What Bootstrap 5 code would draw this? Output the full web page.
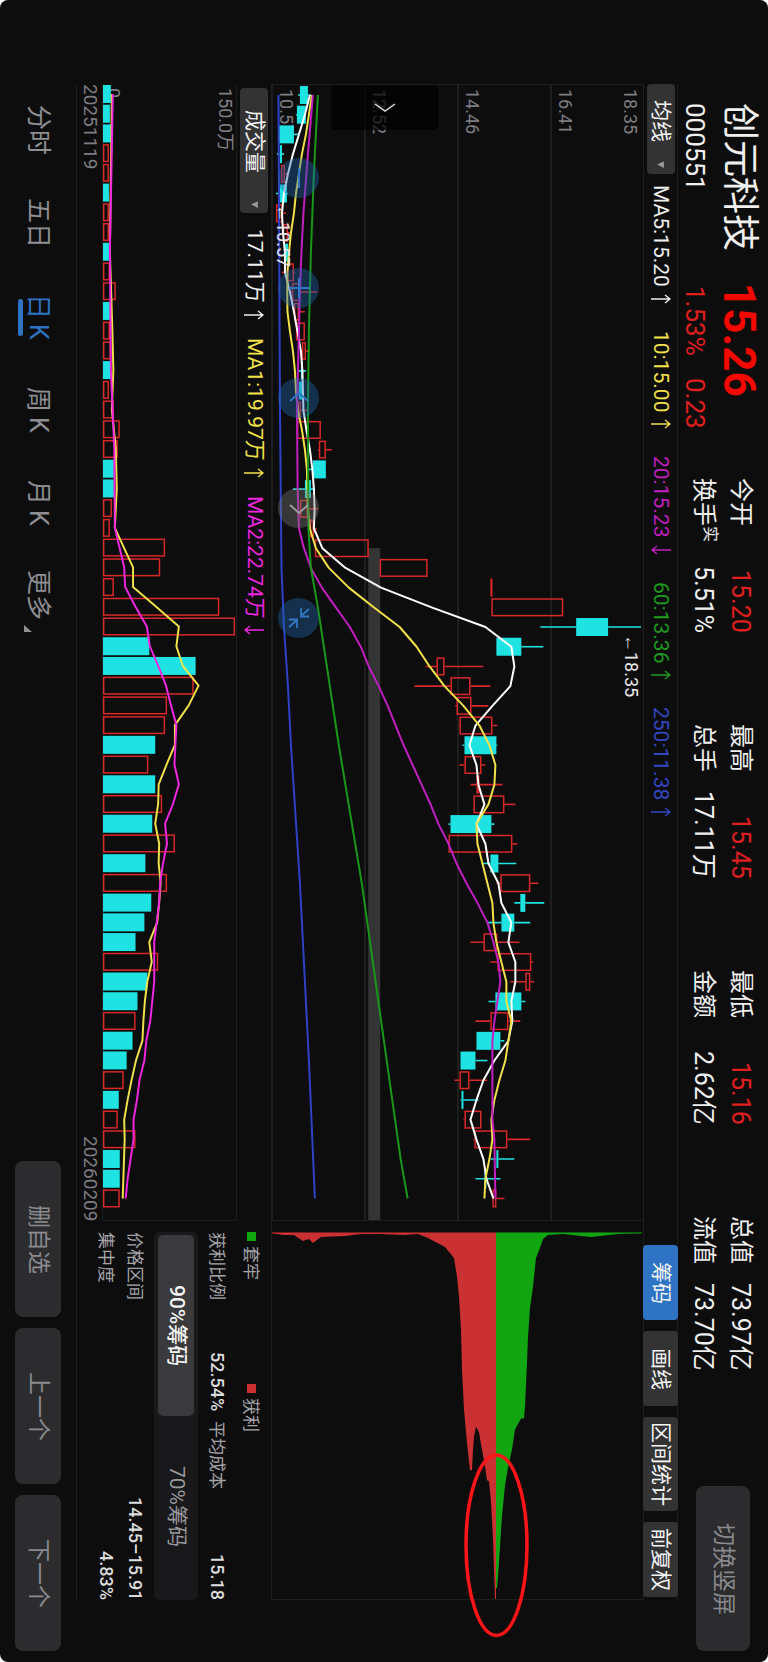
<!DOCTYPE html>
<html lang="zh-CN">
<head>
<meta charset="utf-8">
<meta name="viewport" content="width=device-width, initial-scale=1">
<title>创元科技 000551</title>
<link href="https://cdn.jsdelivr.net/npm/bootstrap@5.3.0/dist/css/bootstrap.min.css" rel="stylesheet">
<style>
:root{--bg:#0d0d0d;--rule:#1e1e1f;--chip:#333334;--dim:#7e7e82;--up:#e01f1f;--accent:#2f74c4;--pad-start:84px;--pad-end:62px}
body{background:#fff;font-family:Roboto,"Liberation Sans","Noto Sans CJK SC",sans-serif;color:#f0f0f0}
/* landscape screen turned a quarter: lines run top to bottom, blocks right to left */
.screen{writing-mode:vertical-rl;text-orientation:sideways;min-height:100vh;width:100%;background:var(--bg);border-radius:8px;line-height:1.2;overflow:hidden;white-space:nowrap}
.screen button,.screen a{writing-mode:vertical-rl;text-orientation:sideways;line-height:1.2;text-decoration:none}
.screen .btn{border:0;padding:0;display:flex;align-items:center;justify-content:center}
.quote{width:90px;padding:103px 9px 11px 0}
.quote .ident{width:78px;height:148px}
.stock{font-size:37px;line-height:40px;margin:0}
.code{font-size:26px;line-height:28px;gap:22px}
.quote .last{width:78px;height:195px;margin-top:32px}
.last .price{font-size:44px;line-height:40px;font-weight:700;color:#f50800}
.last .code{padding-top:3px}
.red{color:var(--up)}
.figures{gap:91px;font-size:24px;line-height:37px}
.figures .pair{height:155px}
.figures .val{font-size:25px}
.figures sup{font-size:16px;line-height:16px;top:0;vertical-align:9px}
.screen .grey-btn{background:#2c2c2e;color:#8a8a8f;border-radius:8px;font-size:23px}
.rotate-btn{width:54px;height:165px;margin-right:9px}
.body-area{margin-top:var(--pad-start);margin-bottom:var(--pad-end)}
.strip{width:35px;border-right:1px solid var(--rule);border-left:1px solid var(--rule);font-size:21px}
.screen .chip-btn{background:var(--chip);color:#f4f4f4;border-radius:4px;font-size:21px}
.screen .pick{width:28px;justify-content:flex-start}
.screen .pick.ma{height:90px;gap:18px;padding-top:16px}
.screen .pick.vol{height:125px;margin-top:4px;gap:27px;padding-top:22px}
.caret{width:9px;height:9px}
.legend-ma{padding-top:11px;gap:27px}
.legend-vol{padding-top:16px;gap:18px}
.arrow{width:20px;height:10px;margin-top:7px}
.tools{gap:11px;margin-bottom:3px}
.tools .btn{width:35px;height:75px}
.tools .btn.wide{height:94px}
.screen .btn.on-blue{background:var(--accent)}
.chips-col{flex:0 0 379px}
.price-box{border-left:1px solid var(--rule);border-top:1px solid var(--rule);border-bottom:1px solid var(--rule)}
.axis{font-size:18px;line-height:20px;color:var(--dim)}
.band{border-left:2px solid var(--rule);padding:4px 3px;flex:1 1 0}
.band.base{border-left:0}
.layer{position:absolute;inset:0;width:100%;height:100%;overflow:visible}
.flag{position:absolute;font-size:18px;line-height:20px;color:#e8e8e8}
.flag.high{left:94%;top:48.4%}
.flag.low{left:0;top:10.5%}
.screen .pull{position:absolute;left:58px;top:0;width:107px;height:45px;background:#000000b0;border-radius:3px}
.zoomers{position:absolute;left:5px;top:73px;gap:70px}
.screen .round{width:41px;height:40px;border-radius:50%;background:#2166ad66}
.screen .round.off{background:#77777766}
.vol-box{width:135px;padding:4px 1px 4px 0;border-left:1px solid var(--rule);border-right:1px solid var(--rule);border-bottom:1px solid var(--rule)}
.dates{width:26px;font-size:19px;line-height:24px;color:var(--dim);border-left:1px solid var(--rule)}
.chip-plot{border-left:1px solid var(--rule);border-bottom:1px solid var(--rule)}
.chip-info{width:195px;gap:9px;padding:11px 10px 0 0;font-size:17px;color:#a4a4a8;border-left:1px solid var(--rule)}
.chip-info .line{width:20px;line-height:20px}
.chip-info .line.key{margin-left:5px}
.chip-info b{font-weight:500;font-size:18px;color:#dcdcdc}
.chip-info .duo{gap:10px}
.chip-info .duo>div{flex:1 1 0}
.sq{width:9px;height:9px;background:#11a611}
.sq.gain{background:#cb3032}
.half{height:152px;gap:5px}
.seg{width:44px;background:#19191b;border-radius:6px;padding:3px 4px}
.screen .seg .btn{flex:1 1 0;font-size:21px;color:#98989c;border-radius:5px}
.screen .seg .btn.on{background:#3a3a3c;color:#f4f4f4;font-weight:500}
.foot{width:76px;padding:0 15px 11px 15px}
.tabs{margin-top:var(--pad-start)}
.tabs a{height:93px;width:46px;font-size:25px;color:#8e8e93;display:flex;align-items:center;justify-content:center;position:relative;gap:5px}
.tabs a.now{color:var(--accent)}
.tabs a.now::after{content:"";position:absolute;left:3px;top:29px;width:5px;height:37px;border-radius:3px;background:var(--accent)}
.tabs .corner{position:absolute;left:9px;top:76px;width:8px;height:7px}
.acts{gap:11px}
.acts .btn{width:46px;height:156px}
</style>
</head>
<body>
<div class="screen d-flex flex-column">

  <header class="quote d-flex align-items-start">
    <div class="ident d-flex flex-column justify-content-between">
      <h1 class="stock fw-normal">创元科技</h1>
      <div class="code">000551</div>
    </div>
    <div class="last d-flex flex-column justify-content-between">
      <div class="price">15.26</div>
      <div class="code red d-flex"><span>1.53%</span><span>0.23</span></div>
    </div>
    <div class="figures d-flex">
      <div class="pair">
        <div class="d-flex justify-content-between"><span>今开</span><span class="val red">15.20</span></div>
        <div class="d-flex justify-content-between"><span>换手<sup>实</sup></span><span class="val">5.51%</span></div>
      </div>
      <div class="pair">
        <div class="d-flex justify-content-between"><span>最高</span><span class="val red">15.45</span></div>
        <div class="d-flex justify-content-between"><span>总手</span><span class="val">17.11万</span></div>
      </div>
      <div class="pair">
        <div class="d-flex justify-content-between"><span>最低</span><span class="val red">15.16</span></div>
        <div class="d-flex justify-content-between"><span>金额</span><span class="val">2.62亿</span></div>
      </div>
      <div class="pair">
        <div class="d-flex justify-content-between"><span>总值</span><span class="val">73.97亿</span></div>
        <div class="d-flex justify-content-between"><span>流值</span><span class="val">73.70亿</span></div>
      </div>
    </div>
    <button type="button" class="btn grey-btn rotate-btn mt-auto">切换竖屏</button>
  </header>

  <main class="body-area flex-fill d-flex flex-column">
    <div class="strip d-flex align-items-center">
      <button type="button" class="btn chip-btn pick ma">均线<svg class="caret" viewBox="0 0 8 8"><path d="M1 4 7 1V7Z" fill="#9a9a9e"/></svg></button>
      <div class="legend-ma d-flex" id="maLegend"></div>
      <div class="tools d-flex mt-auto">
        <button type="button" class="btn chip-btn on-blue">筹码</button>
        <button type="button" class="btn chip-btn">画线</button>
        <button type="button" class="btn chip-btn wide">区间统计</button>
        <button type="button" class="btn chip-btn">前复权</button>
      </div>
    </div>

    <div class="flex-fill d-flex">
      <section class="flex-fill d-flex flex-column">
        <div class="price-box flex-fill position-relative d-flex flex-column axis">
          <div class="band d-flex flex-column justify-content-between"><span>18.35</span><span>16.41</span></div>
          <div class="band d-flex flex-column justify-content-end">14.46</div>
          <div class="band d-flex flex-column justify-content-end">12.52</div>
          <div class="band base d-flex flex-column justify-content-end">10.57</div>
          <svg class="layer" id="priceSvg" viewBox="271 84 371 1137" preserveAspectRatio="none"></svg>
          <span class="flag high">←18.35</span>
          <span class="flag low">←10.57</span>
          <button type="button" class="btn pull" aria-label="展开"><svg width="22" height="10" viewBox="0 0 22 10"><path d="M1 1 11 8 21 1" fill="none" stroke="#ddd" stroke-width="1.5"/></svg></button>
          <div class="zoomers d-flex">
            <button type="button" class="btn round" aria-label="缩小"><svg width="22" height="22" viewBox="0 0 22 22"><path d="M11 1V21" stroke="#3377c4" stroke-width="2"/></svg></button>
            <button type="button" class="btn round" aria-label="放大"><svg width="22" height="22" viewBox="0 0 22 22"><path d="M11 1V21M1 11H21" stroke="#3377c4" stroke-width="2"/></svg></button>
            <button type="button" class="btn round" aria-label="左移"><svg width="22" height="22" viewBox="0 0 22 22"><path d="M2 14 11 6 20 14" fill="none" stroke="#3377c4" stroke-width="2"/></svg></button>
            <button type="button" class="btn round off" aria-label="右移"><svg width="22" height="22" viewBox="0 0 22 22"><path d="M2 8 11 16 20 8" fill="none" stroke="#9a9a9e" stroke-width="2"/></svg></button>
            <button type="button" class="btn round" aria-label="收起"><svg width="22" height="22" viewBox="0 0 22 22"><path d="M21 2 13 9M13 1V9.500H21M1 20 9 13M1 12.500H9V21" fill="none" stroke="#3377c4" stroke-width="1.800"/></svg></button>
          </div>
        </div>
        <div class="strip d-flex align-items-center border-start-0">
          <button type="button" class="btn chip-btn pick vol">成交量<svg class="caret" viewBox="0 0 8 8"><path d="M1 4 7 1V7Z" fill="#9a9a9e"/></svg></button>
          <div class="legend-vol d-flex" id="volLegend"></div>
        </div>
        <div class="vol-box position-relative axis d-flex flex-column justify-content-between">
          <span>150.0万</span><span>0</span>
          <svg class="layer" id="volSvg" viewBox="102 84 135 1137" preserveAspectRatio="none"></svg>
        </div>
        <div class="dates d-flex justify-content-between"><span>20251119</span><span>20260209</span></div>
      </section>

      <aside class="chips-col d-flex flex-column">
        <div class="chip-plot flex-fill position-relative">
          <svg class="layer" viewBox="271 1221 371 379" preserveAspectRatio="none">
            <path fill="#11a611" d="M495 1233H640L617 1234 590 1237 562 1234 547 1235 542 1239 540 1245 535 1258 532 1287 529 1308 527 1337 526 1363 524 1407 523 1419H520L514 1430 511 1450 507 1468 504 1486 501 1517 499 1547 497 1578 496 1589H495Z"/>
            <path fill="#cb3032" d="M495 1233V1600H494L493 1570 492 1540 490 1503 488 1482 486 1481 484 1467 481 1450 478 1433 475 1427 473 1437 472 1450 471 1471H469L467 1453 465 1433 463 1410 461 1370 460 1330 458 1297 456 1277 453 1258 444 1247 427 1238 417 1234 403 1235 379 1234 360 1234 344 1236 320 1237 312 1243 308 1239 302 1241 293 1235 282 1235 271 1233Z"/>
            <path d="M271 1233H495" stroke="#cb3032"/><path d="M495 1233H641" stroke="#11a611"/>
            <ellipse cx="495.500" cy="1546" rx="30.500" ry="90.500" fill="none" stroke="#ff1418" stroke-width="3.500"/>
          </svg>
        </div>
        <div class="chip-info d-flex flex-column">
          <div class="line key d-flex">
            <span class="half d-flex align-items-center"><i class="sq"></i>套牢</span>
            <span class="half d-flex align-items-center"><i class="sq gain"></i>获利</span>
          </div>
          <div class="line duo d-flex">
            <div class="d-flex justify-content-between"><span>获利比例</span><b>52.54%</b></div>
            <div class="d-flex justify-content-between"><span>平均成本</span><b>15.18</b></div>
          </div>
          <div class="seg d-flex" role="group">
            <button type="button" class="btn on">90%筹码</button>
            <button type="button" class="btn">70%筹码</button>
          </div>
          <div class="line d-flex justify-content-between"><span>价格区间</span><b>14.45–15.91</b></div>
          <div class="line d-flex justify-content-between"><span>集中度</span><b>4.83%</b></div>
        </div>
      </aside>
    </div>
  </main>

  <footer class="foot d-flex align-items-center">
    <nav class="tabs d-flex">
      <a href="#">分时</a><a href="#">五日</a><a href="#" class="now">日<span>K</span></a><a href="#">周<span>K</span></a><a href="#">月<span>K</span></a>
      <a href="#">更多<svg class="corner" viewBox="0 0 8 7"><path d="M0 0V7H8Z" fill="#8e8e93"/></svg></a>
    </nav>
    <div class="acts d-flex mt-auto">
      <button type="button" class="btn grey-btn">删自选</button>
      <button type="button" class="btn grey-btn">上一个</button>
      <button type="button" class="btn grey-btn">下一个</button>
    </div>
  </footer>
</div>

<script src="https://cdn.jsdelivr.net/npm/bootstrap@5.3.0/dist/js/bootstrap.bundle.min.js"></script>
<script>
// legends: label, colour, trend
const arrow=(c,up)=>`<svg class="arrow" viewBox="0 0 20 10"><path d="${up?'M0 5H19M14 1 19 5 14 9':'M20 5H1M6 1 1 5 6 9'}" fill="none" stroke="${c}" stroke-width="1.4"/></svg>`;
const legend=(id,items)=>document.getElementById(id).innerHTML=items.map(([t,c,up])=>`<span class="d-flex align-items-center" style="color:${c}">${t}${arrow(c,up)}</span>`).join('');
legend('maLegend',[['MA5:15.20','#f0f0f0',1],['10:15.00','#f2e24a',1],['20:15.23','#c01fc0',0],['60:13.36','#1f9a1f',1],['250:11.38','#3346c4',1]]);
legend('volLegend',[['17.11万','#f0f0f0',1],['MA1:19.97万','#f2e24a',1],['MA2:22.74万','#f026e0',0]]);

const at=i=>94+19.74*i, RED='#d82828', CYAN='#1fe3e3';
const line=(pts,c,w=2)=>`<polyline points="${pts.map(([i,x])=>x+','+at(i)).join(' ')}" fill="none" stroke="${c}" stroke-width="${w}" stroke-linejoin="round"/>`;
const seq=a=>a.map((x,i)=>[i,x]);
const bar=(kind,i,a,b)=>kind==='c'
  ?`<rect x="${a}" y="${at(i)-9}" width="${b-a}" height="18" fill="${CYAN}"/>`
  :`<rect x="${a+.7}" y="${at(i)-8.3}" width="${Math.max(b-a-1.4,.3)}" height="16.6" fill="none" stroke="${RED}" stroke-width="1.5"/>`;

// kind, low, body start, body end, high
const candles=[['c',296,298,306,309],['c',294,295,304,304],['c',277,277,292,296],['c',275,278,280,282],['r',279,279,283,286],['c',274,277,285,286],['r',274,274,281,284],['r',280,281,286,288],['c',282,283,286,287],['r',280,285,292,293],['r',288,290,298,315],['r',291,292,297,303],['r',294,294,303,303],['r',299,300,304,308],['c',296,299,301,304],['c',295,297,301,301],['r',294,296,299,306],['r',295,295,319,319],['r',316,317,324,330],['c',307,311,324,324],['c',291,303,309,313],['r',298,298,306,316],['r',307,308,312,315],['r',313,313,367,367],['r',378,378,426,426],['r',489,489,491,491],['r',490,490,562,562],['c',539,575,607,640],['c',495,495,520,542],['r',424,435,443,482],['r',413,449,469,489],['r',454,455,470,487],['r',457,458,491,496],['c',461,463,495,496],['r',458,463,480,484],['r',469,475,478,501],['r',472,472,503,514],['c',447,449,490,493],['r',447,447,511,516],['c',481,489,497,515],['r',495,499,529,537],['c',513,519,524,543],['c',486,500,513,529],['r',469,482,496,518],['r',489,496,530,532],['r',509,524,529,533],['c',487,494,520,524],['r',474,489,507,519],['c',475,475,499,503],['c',459,459,474,486],['r',453,458,468,486],['c',459,460,462,477],['r',462,463,480,480],['r',472,473,506,529],['c',489,495,497,513],['c',474,483,485,499],['r',491,491,495,503]];
let s='<rect x="366.500" y="548" width="12" height="673" fill="#343434"/>';
candles.forEach(([k,lo,a,b,hi],i)=>{const c=k==='c'?CYAN:RED;
  s+=`<path d="M${lo} ${at(i)}H${a}M${b} ${at(i)}H${hi}" stroke="${c}" stroke-width="1.6"/>`+bar(k,i,a,b);});
s+=line([[0,276.5],[16,278],[24,279.5],[27,282],[30,286],[33,289],[40,298],[49,307],[56,313]],'#2f41c4');
s+=line(seq([308,303,297,291,286,282,280,281,283,283,288,292,295.5,299,300.5,301,301.5,304.5,308,310.5,312,312.7,312,320.5,343.7,379.3,430,484,510,513,509,491,474,468,475,477,483,475,484,487,497,500,510,507,514,514,510,511,507,493,482,475,469,475,482,485,492]),'#fff');
s+=line(seq([310,307,304,300,297,294,292,289,287,285.5,285.3,285.5,288,291,293,294,296,300,303,305,305.5,306,308,314,327,347,372,398,415,428,443,462,478,488,494,493,487,475,476,481,486,491,492,495,500,505,505,510,507,504,498,493,490,491,488,484,483]),'#f2e24a');
s+=line([[0,311],[3,306],[6,301.5],[8,299.5],[10,298],[12,297],[16,295],[20,295.7],[22,297],[23,302],[24,309],[25,320],[26,334],[27,348],[28,359],[29,367],[30,377],[31,386],[33,402],[34,411],[35,420],[36,429],[37,437],[38,447],[39,455],[40,465],[41,476],[42,486],[43,492],[44,497],[45,499],[46,496],[47,493],[48,491],[52,491],[53,493],[56,494]],'#c01fc0');
s+=line([[0,316],[4,312],[8,309],[12,307],[16,306],[22,306.5],[24,309],[26,316],[28,322],[30,328],[33,337],[40,360],[49,385],[54,399],[56,406]],'#1a961a');
document.getElementById('priceSvg').innerHTML=s;

const kinds='cccrrcrrcrrcrrcrrrrccrrrrrrrccrrrcrcrcrcrcccrccrccrcrrccr';
const vols=[110,109,110,108,108,108,108,108,108,109,115,109,109,110,110,108,113,119,117,113,113,111,109,165,160,113,220,236,149,196,194,167,165,155,148,155,162,152,175,145,167,151,144,135,158,147,137,135,132,126,123,118,117,135,119,119,119];
s=vols.map((v,i)=>bar(kinds[i],i,102,v)).join('');
s+=line([[0,111],[4,110],[8,109],[12,111.5],[14,112.5],[16,111],[18,115],[20,116],[22,114],[24,132.5],[25,132.5],[26,156],[27,179],[28,176.5],[29,183],[30,199],[31,189],[32,175],[33,175],[34,166.5],[35,158.5],[36,158],[37,155],[38,159],[39,158.5],[40,160.5],[41,159],[42,157],[43,149],[44,151.5],[45,147],[46,144.5],[47,143],[48,142],[49,135.5],[50,131],[51,127],[52,123.5],[53,124],[56,122]],'#f2e24a');
s+=line([[0,112],[4,110.5],[8,109],[14,110],[18,113.5],[22,114],[24,123.5],[25,124.5],[26,135],[27,146.5],[28,149.5],[29,158],[30,166],[31,171],[32,176.5],[34,174.5],[35,179],[36,173],[37,165],[38,167],[39,163],[40,160],[41,159],[42,156.5],[43,154],[45,154],[46,152],[47,150],[48,146],[49,144],[50,139],[51,136.5],[52,133],[53,133],[54,130],[55,127],[56,125]],'#f026e0');
document.getElementById('volSvg').innerHTML=s;
</script>
</body>
</html>
